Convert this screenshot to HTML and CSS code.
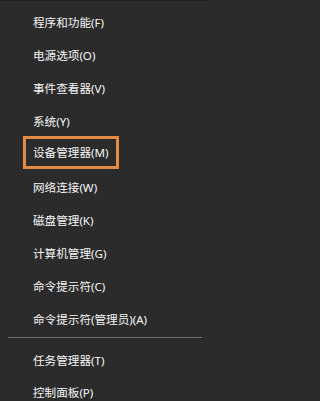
FILE: index.html
```html
<!DOCTYPE html>
<html lang="zh-CN">
<head>
<meta charset="utf-8">
<title>菜单</title>
<link rel="stylesheet" href="styles.css">
</head>
<body>
<div class="menu">
  <ul class="group">
    <li class="item"><span class="label">程序和功能(F)</span></li>
    <li class="item"><span class="label">电源选项(O)</span></li>
    <li class="item"><span class="label">事件查看器(V)</span></li>
    <li class="item"><span class="label">系统(Y)</span></li>
    <li class="item"><span class="label highlight">设备管理器(M)</span></li>
    <li class="item"><span class="label">网络连接(W)</span></li>
    <li class="item"><span class="label">磁盘管理(K)</span></li>
    <li class="item"><span class="label">计算机管理(G)</span></li>
    <li class="item"><span class="label">命令提示符(C)</span></li>
    <li class="item"><span class="label">命令提示符(管理员)(A)</span></li>
  </ul>
  <div class="separator"></div>
  <ul class="group">
    <li class="item short"><span class="label">任务管理器(T)</span></li>
    <li class="item short"><span class="label">控制面板(P)</span></li>
  </ul>
</div>
</body>
</html>
```

FILE: styles.css
```css
html, body {
  margin: 0;
  padding: 0;
  background: #2b2b2b;
}
body {
  height: 401px;
  overflow: hidden;
  font-family: "Noto Sans", "Noto Sans CJK SC", sans-serif;
  font-size: 11.6px;
  color: #f6f6f6;
}
.menu {
  box-sizing: border-box;
  width: 210px;
  height: 401px;
  padding-top: 4px;
  border-top: 1px solid #222222;
}
.group {
  list-style: none;
  margin: 0;
  padding: 0;
}
.item {
  height: 33px;
  display: flex;
  align-items: center;
  padding-left: 33px;
}
.item.short {
  height: 32px;
}
.label {
  white-space: nowrap;
}
.highlight {
  box-sizing: border-box;
  display: inline-flex;
  align-items: center;
  height: 33px;
  margin-left: -10px;
  margin-top: -3px;
  padding: 0 8px 0 7px;
  border: 3px solid #e38b45;
}
.separator {
  height: 1px;
  margin: 2px 8px 6px 8px;
  background: #707070;
}
```
